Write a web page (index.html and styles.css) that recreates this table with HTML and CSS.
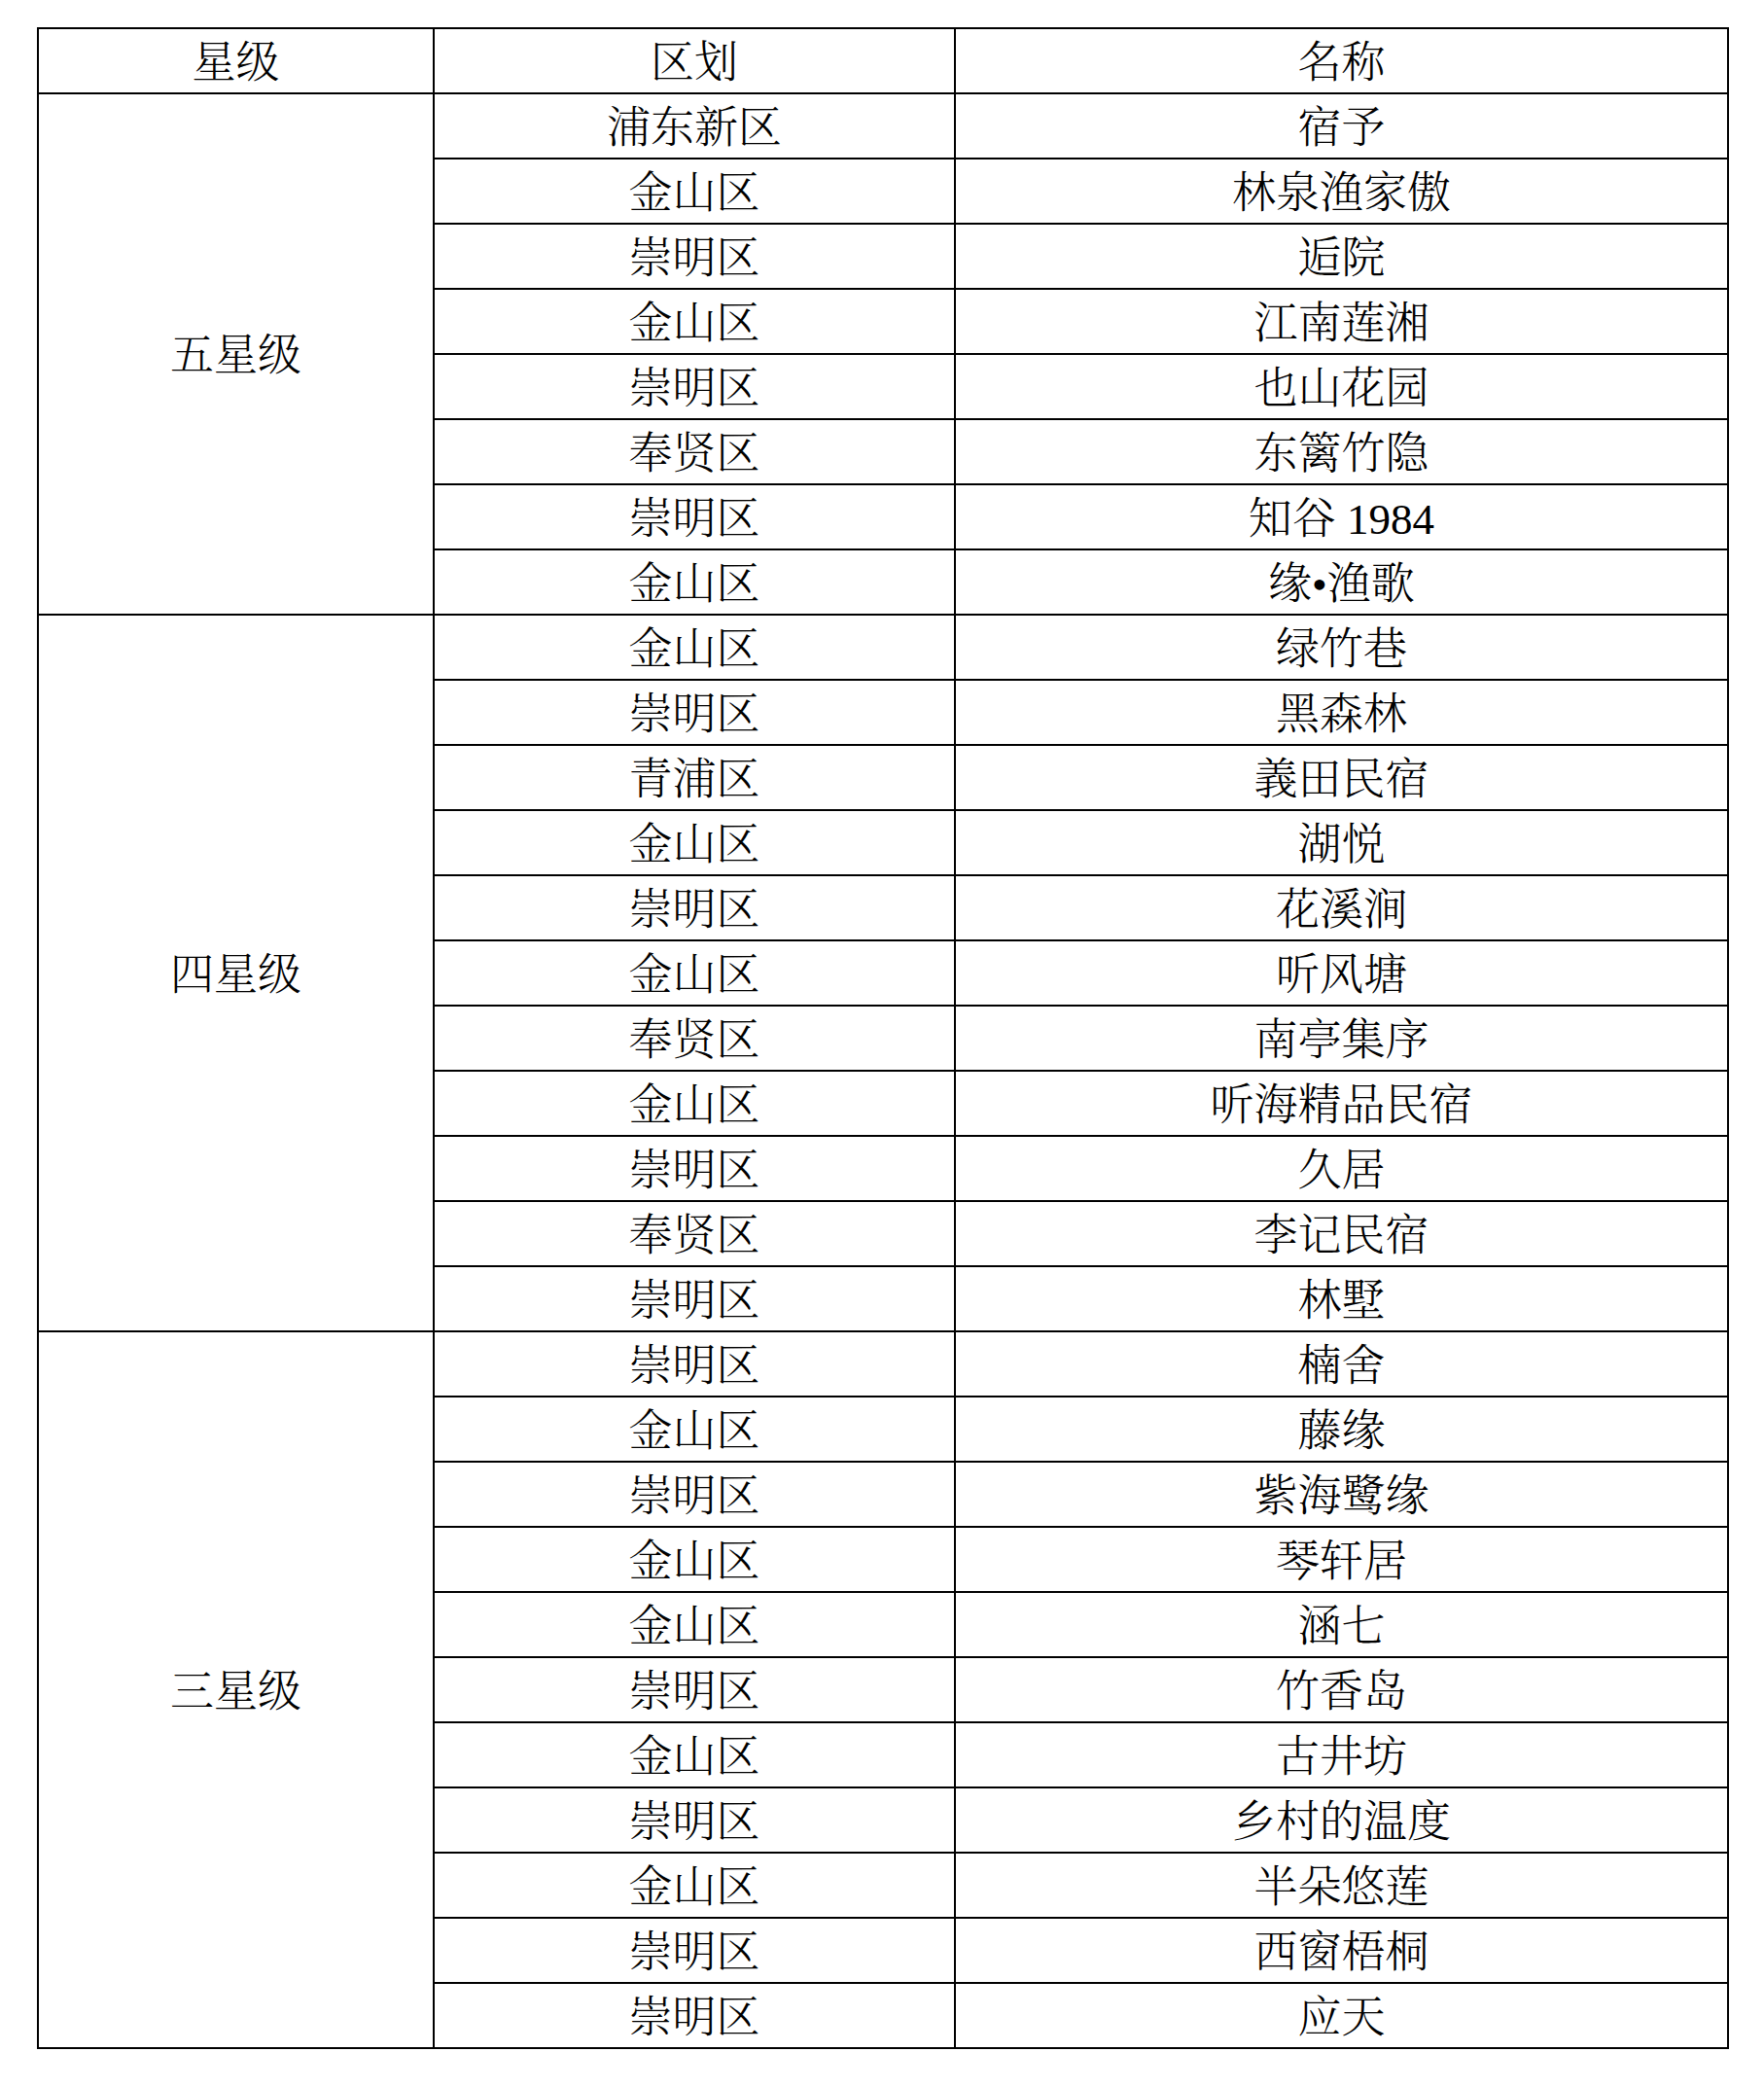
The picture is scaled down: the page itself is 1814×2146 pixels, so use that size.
FILE: index.html
```html
<!DOCTYPE html>
<html lang="zh-CN">
<head>
<meta charset="utf-8">
<title>民宿星级名单</title>
<link rel="stylesheet" href="styles.css">
</head>
<body>
<div class="page">
<table class="grid">
<colgroup><col class="c1"><col class="c2"><col class="c3"></colgroup>
<thead>
<tr><th>星级</th><th>区划</th><th>名称</th></tr>
</thead>
<tbody>
<tr><td rowspan="8">五星级</td><td>浦东新区</td><td>宿予</td></tr>
<tr><td>金山区</td><td>林泉渔家傲</td></tr>
<tr><td>崇明区</td><td>逅院</td></tr>
<tr><td>金山区</td><td>江南莲湘</td></tr>
<tr><td>崇明区</td><td>也山花园</td></tr>
<tr><td>奉贤区</td><td>东篱竹隐</td></tr>
<tr><td>崇明区</td><td>知谷 1984</td></tr>
<tr><td>金山区</td><td>缘•渔歌</td></tr>
<tr><td rowspan="11">四星级</td><td>金山区</td><td>绿竹巷</td></tr>
<tr><td>崇明区</td><td>黑森林</td></tr>
<tr><td>青浦区</td><td>義田民宿</td></tr>
<tr><td>金山区</td><td>湖悦</td></tr>
<tr><td>崇明区</td><td>花溪涧</td></tr>
<tr><td>金山区</td><td>听风塘</td></tr>
<tr><td>奉贤区</td><td>南亭集序</td></tr>
<tr><td>金山区</td><td>听海精品民宿</td></tr>
<tr><td>崇明区</td><td>久居</td></tr>
<tr><td>奉贤区</td><td>李记民宿</td></tr>
<tr><td>崇明区</td><td>林墅</td></tr>
<tr><td rowspan="11">三星级</td><td>崇明区</td><td>楠舍</td></tr>
<tr><td>金山区</td><td>藤缘</td></tr>
<tr><td>崇明区</td><td>紫海鹭缘</td></tr>
<tr><td>金山区</td><td>琴轩居</td></tr>
<tr><td>金山区</td><td>涵七</td></tr>
<tr><td>崇明区</td><td>竹香岛</td></tr>
<tr><td>金山区</td><td>古井坊</td></tr>
<tr><td>崇明区</td><td>乡村的温度</td></tr>
<tr><td>金山区</td><td>半朵悠莲</td></tr>
<tr><td>崇明区</td><td>西窗梧桐</td></tr>
<tr><td>崇明区</td><td>应天</td></tr>
</tbody>
</table>
</div>
</body>
</html>
```
FILE: styles.css
```css
html, body {
  margin: 0;
  padding: 0;
  background: #fff;
}
.page {
  padding: 28px 0 0 38px;
}
.grid {
  border-collapse: collapse;
  width: 1738px;
  table-layout: fixed;
  font-family: "Liberation Serif", "Noto Serif CJK SC", "AR PL UMing CN", "Noto Sans CJK SC", serif;
  font-size: 45px;
  font-weight: 300;
  color: #000;
}
.c1 { width: 407px; }
.c2 { width: 536px; }
.c3 { width: 795px; }
.grid th, .grid td {
  border: 2px solid #000;
  height: 60px;
  padding: 5px 0 0;
  text-align: center;
  vertical-align: middle;
  font-weight: 300;
  line-height: 1;
}
```
